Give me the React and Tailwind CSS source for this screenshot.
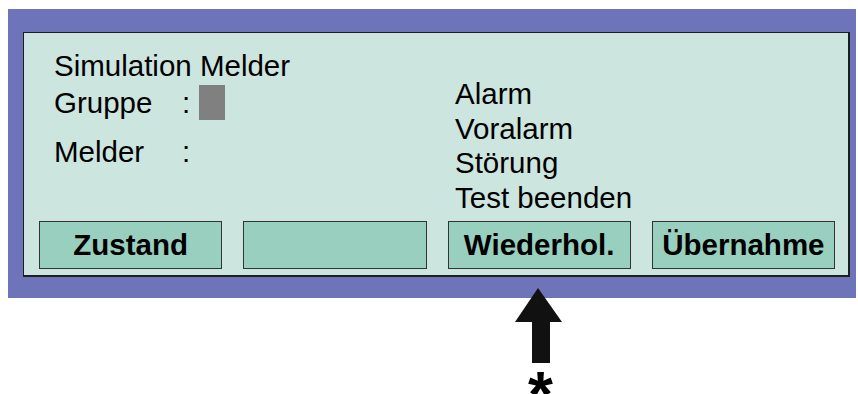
export default function App() {
  const font = { fontFamily: '"Liberation Sans", Arial, sans-serif' };
  const btns = ["Zustand", "", "Wiederhol.", "Übernahme"];
  return (
    <div className="relative w-[858px] h-[394px] bg-white overflow-hidden text-black" style={font}>
      <div className="ml-[8px] mt-[9px] w-[848px] h-[289px] bg-[#6d74b9] pl-[15px] pt-[23px]">
        <div className="w-[827px] h-[245px] bg-[#cce5df] border border-[#1e1e1e] border-r-2 border-b-2 flex flex-col">
          <div className="flex pl-[30px] pt-[14px] text-[29.5px] leading-[37px]">
            <div className="w-[401px] flex flex-col">
              <div>Simulation Melder</div>
              <div className="flex items-center">
                <span className="w-[128px]">Gruppe</span>
                <span>:</span>
                <span className="ml-[9px] w-[26px] h-[35px] bg-[#808080]"></span>
              </div>
              <div className="flex mt-[12px]">
                <span className="w-[128px]">Melder</span>
                <span>:</span>
              </div>
            </div>
            <div className="flex flex-col pt-[30px] leading-[34.7px]">
              <div>Alarm</div>
              <div>Voralarm</div>
              <div>Störung</div>
              <div>Test beenden</div>
            </div>
          </div>
          <div className="mt-auto flex gap-[21px] pl-[15px] pr-[13px] pb-[6px]">
            {btns.map((b, i) => (
              <div
                key={i}
                className="flex-1 h-[48px] bg-[#99cfbf] border border-[#333] flex items-center justify-center font-bold text-[29.5px] leading-none"
              >
                {b}
              </div>
            ))}
          </div>
        </div>
      </div>
      <svg className="absolute left-[514px] top-[287px]" width="50" height="78" viewBox="0 0 50 78">
        <polygon points="24,1 1,35 48,35" fill="#111" />
        <rect x="18" y="35" width="18" height="41" fill="#111" />
      </svg>
      <span className="absolute left-[528px] top-[363px] font-bold text-[64px] leading-none">*</span>
    </div>
  );
}
